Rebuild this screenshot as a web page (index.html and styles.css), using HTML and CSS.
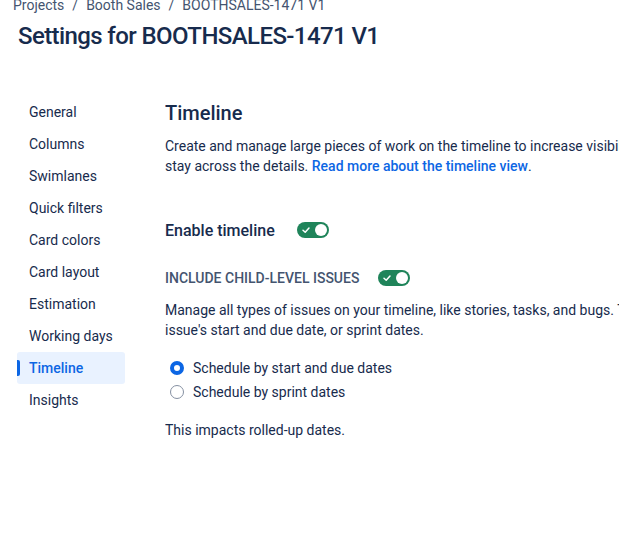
FILE: index.html
```html
<!DOCTYPE html>
<html>
<head>
<meta charset="utf-8">
<link rel="stylesheet" href="styles.css">
</head>
<body>
<div class="page">
  <nav class="crumbs">
    <span>Projects</span><span class="sep">/</span><span>Booth Sales</span><span class="sep">/</span><span>BOOTHSALES-1471 V1</span>
  </nav>
  <h1 class="title">Settings for BOOTHSALES-1471 V1</h1>
  <div class="layout">
    <ul class="side">
      <li class="item">General</li>
      <li class="item">Columns</li>
      <li class="item">Swimlanes</li>
      <li class="item">Quick filters</li>
      <li class="item">Card colors</li>
      <li class="item">Card layout</li>
      <li class="item">Estimation</li>
      <li class="item">Working days</li>
      <li class="item active">Timeline</li>
      <li class="item">Insights</li>
    </ul>
    <main class="main">
      <h2 class="heading">Timeline</h2>
      <p class="desc">Create and manage large pieces of work on the timeline to increase visibility and help your team<br>stay across the details. <a class="link">Read more about the timeline view</a>.</p>
      <div class="row enable">
        <span class="enable-label">Enable timeline</span>
        <span class="toggle"><svg class="check" width="10" height="10" viewBox="0 0 10 10"><path d="M2 5.2 L4.2 7.2 L8 3" fill="none" stroke="#fff" stroke-width="1.5" stroke-linecap="round" stroke-linejoin="round"/></svg><span class="knob"></span></span>
      </div>
      <div class="row child">
        <span class="child-label">INCLUDE CHILD-LEVEL ISSUES</span>
        <span class="toggle toggle-child"><svg class="check" width="10" height="10" viewBox="0 0 10 10"><path d="M2 5.2 L4.2 7.2 L8 3" fill="none" stroke="#fff" stroke-width="1.5" stroke-linecap="round" stroke-linejoin="round"/></svg><span class="knob"></span></span>
      </div>
      <p class="desc2">Manage all types of issues on your timeline, like stories, tasks, and bugs. Then, schedule them by the<br>issue's start and due date, or sprint dates.</p>
      <div class="radios">
        <label class="radio"><span class="dot on"></span>Schedule by start and due dates</label>
        <label class="radio"><span class="dot"></span>Schedule by sprint dates</label>
      </div>
      <p class="note">This impacts rolled-up dates.</p>
    </main>
  </div>
</div>
</body>
</html>
```
FILE: styles.css
```css
* { box-sizing: border-box; }
html, body { margin: 0; padding: 0; background: #fff; overflow: hidden; }
body {
  font-family: Roboto, "Noto Sans", sans-serif;
  color: #172B4D;
  font-size: 14px;
  width: 619px;
  height: 557px;
}
.page { margin-top: -5px; }
.crumbs {
  padding-left: 13px;
  height: 20px;
  line-height: 20px;
  color: #44546F;
  font-size: 14px;
  white-space: nowrap;
}
.sep { margin: 0 8px; }
.title {
  margin: 7px 0 0 18px;
  font-size: 24px;
  line-height: 28px;
  font-weight: 500;
  letter-spacing: -0.6px;
  color: #172B4D;
  white-space: nowrap;
}
.layout {
  display: flex;
  margin-top: 46px;
}
.side {
  list-style: none;
  margin: 0 0 0 17px;
  padding: 0;
  width: 108px;
  flex: none;
}
.item {
  height: 32px;
  line-height: 32px;
  padding-left: 12px;
  border-radius: 3px;
  position: relative;
  white-space: nowrap;
}
.item.active {
  background: #E9F2FF;
  color: #0C66E4;
  font-weight: 500;
}
.item.active::before {
  content: "";
  position: absolute;
  left: 0;
  top: 8px;
  width: 3px;
  height: 16px;
  background: #0C66E4;
  border-radius: 0 2px 2px 0;
}
.main {
  margin-left: 40px;
  width: 470px;
  flex: none;
  white-space: nowrap;
  overflow: hidden;
}
.heading {
  margin: 5px 0 0;
  font-size: 20px;
  line-height: 24px;
  font-weight: 500;
}
.desc, .desc2, .note {
  margin: 0;
  line-height: 20px;
}
.desc { margin-top: 11px; }
.link { color: #0C66E4; font-weight: 500; }
.row {
  display: flex;
  align-items: center;
  height: 24px;
}
.enable { margin-top: 42px; }
.enable-label { font-size: 16px; font-weight: 500; }
.child { margin-top: 24px; }
.child-label { font-size: 14px; font-weight: 500; color: #44546F; }
.toggle {
  margin-left: 22px;
  width: 32px;
  height: 16px;
  border-radius: 8px;
  background: #1F845A;
  display: flex;
  align-items: center;
  justify-content: space-between;
  padding: 0 2px 0 4px;
}
.toggle-child { margin-left: 19px; }
.knob {
  width: 12px;
  height: 12px;
  border-radius: 50%;
  background: #fff;
}
.desc2 { margin-top: 10px; }
.radios { margin-top: 16px; }
.radio {
  display: flex;
  align-items: center;
  height: 24px;
  padding-left: 5px;
}
.dot {
  width: 14px;
  height: 14px;
  border-radius: 50%;
  border: 1px solid #8590A2;
  margin-right: 9px;
  flex: none;
}
.dot.on {
  border: 4px solid #0C66E4;
  background: #fff;
}
.note { margin-top: 16px; }
```
